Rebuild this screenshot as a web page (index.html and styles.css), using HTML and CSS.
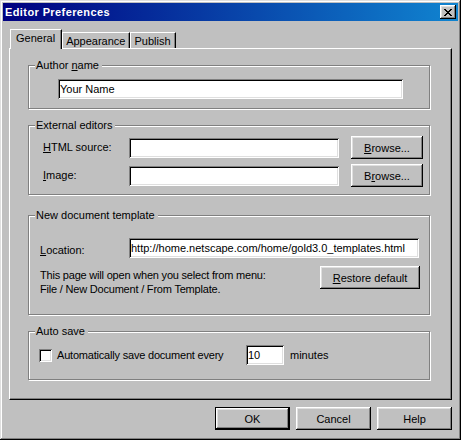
FILE: index.html
```html
<!DOCTYPE html>
<html>
<head>
<meta charset="utf-8">
<title>Editor Preferences</title>
<link rel="stylesheet" href="styles.css">
</head>
<body>
<div class="window">
  <div class="titlebar">
    <span class="title">Editor Preferences</span>
    <button class="close" type="button" aria-label="Close">
      <svg width="8" height="7" viewBox="0 0 8 7" shape-rendering="crispEdges"><path fill="#000" d="M0 0h2v1H0zM6 0h2v1H6zM1 1h2v1H1zM5 1h2v1H5zM2 2h4v1H2zM3 3h2v1H3zM2 4h4v1H2zM1 5h2v1H1zM5 5h2v1H5zM0 6h2v1H0zM6 6h2v1H6z"/></svg>
    </button>
  </div>
  <div class="client">
    <div class="tabs">
      <div class="tab tab-active">General</div>
      <div class="tab">Appearance</div>
      <div class="tab">Publish</div>
    </div>
    <div class="panel">
      <fieldset class="group group-author">
        <legend>Author <u>n</u>ame</legend>
        <div class="author-body">
          <input class="field field-author" type="text" value="Your Name">
        </div>
      </fieldset>

      <fieldset class="group group-editors">
        <legend>External editors</legend>
        <div class="editors-body">
          <label class="row-label"><u>H</u>TML source:</label>
          <input class="field field-editor" type="text" value="">
          <button class="btn btn-browse" type="button"><u>B</u>rowse...</button>
          <label class="row-label"><u>I</u>mage:</label>
          <input class="field field-editor" type="text" value="">
          <button class="btn btn-browse" type="button">B<u>r</u>owse...</button>
        </div>
      </fieldset>

      <fieldset class="group group-template">
        <legend>New document template</legend>
        <div class="template-body">
          <div class="location-row">
            <label class="location-label"><u>L</u>ocation:</label>
            <input class="field field-location" type="text" value="http://home.netscape.com/home/gold3.0_templates.html">
          </div>
          <div class="restore-row">
            <p class="hint">This page will open when you select from menu:<br>File / New Document / From Template.</p>
            <button class="btn btn-restore" type="button"><u>R</u>estore default</button>
          </div>
        </div>
      </fieldset>

      <fieldset class="group group-autosave">
        <legend>Auto save</legend>
        <div class="autosave-body">
          <span class="checkbox"></span>
          <span class="autosave-label">Automatically save document every</span>
          <input class="field field-minutes" type="text" value="10">
          <span class="minutes">minutes</span>
        </div>
      </fieldset>
    </div>
    <div class="actions">
      <button class="btn btn-action btn-default" type="button">OK</button>
      <button class="btn btn-action" type="button">Cancel</button>
      <button class="btn btn-action" type="button">Help</button>
    </div>
  </div>
</div>
</body>
</html>
```

FILE: styles.css
```css
html, body {
  margin: 0;
  padding: 0;
  background: #c0c0c0;
}

body {
  font-family: "Liberation Sans", Arial, sans-serif;
  font-size: 11px;
  line-height: 13px;
  color: #000;
}

.window {
  width: 461px;
  height: 440px;
  box-sizing: border-box;
  padding: 3px;
  background: #c0c0c0;
  box-shadow: inset -1px -1px #000, inset 1px 1px #dfdfdf, inset -2px -2px #808080, inset 2px 2px #fff;
}

.titlebar {
  height: 18px;
  display: flex;
  align-items: center;
  justify-content: space-between;
  padding: 0 2px;
  background: linear-gradient(90deg, #000080, #1084d0);
}

.title {
  color: #fff;
  font-weight: bold;
  font-size: 11px;
  line-height: 18px;
  letter-spacing: 0.4px;
}

.close {
  width: 16px;
  height: 14px;
  padding: 0;
  border: 0;
  margin: 0;
  background: #c0c0c0;
  box-shadow: inset -1px -1px #000, inset 1px 1px #fff, inset -2px -2px #808080, inset 2px 2px #dfdfdf;
  display: flex;
  align-items: flex-start;
  justify-content: flex-start;
}

.close svg {
  display: block;
  margin: 4px 0 0 4px;
}

.client {
  padding: 0 6px;
}

.tabs {
  position: relative;
  z-index: 1;
  display: flex;
  align-items: flex-end;
  margin-top: 8px;
  padding-left: 3px;
}

.tab {
  height: 16px;
  box-sizing: border-box;
  padding: 2px 4px 0 3px;
  border-top: 1px solid #fff;
  border-left: 1px solid #fff;
  border-right: 1px solid #000;
  box-shadow: inset -1px 0 #808080;
  background: #c0c0c0;
  white-space: nowrap;
}

.tab-active {
  height: 20px;
  padding: 2px 6px 0 5px;
  margin: 0 0 -1px -2px;
}

.panel {
  height: 352px;
  box-sizing: border-box;
  padding: 0 21px 0 18px;
  border: 1px solid;
  border-color: #fff #000 #000 #fff;
  box-shadow: inset -1px -1px #808080;
}

.group {
  margin: 10px 0 0;
  padding: 0;
  min-width: 0;
  border: 1px solid #808080;
  box-shadow: 1px 1px 0 #fff, inset 1px 1px 0 #fff;
}

.group-template {
  margin-top: 14px;
}

.group legend {
  margin-left: 6px;
  padding: 0 3px 0 1px;
  line-height: 13px;
  background: #c0c0c0;
}

.field {
  display: block;
  height: 20px;
  box-sizing: border-box;
  margin: 0;
  padding: 0 2px;
  border: 0;
  outline: none;
  background: #fff;
  font-family: "Liberation Sans", Arial, sans-serif;
  font-size: 11px;
  color: #000;
  box-shadow: inset 1px 1px #808080, inset -1px -1px #fff, inset 2px 2px #000, inset -2px -2px #dfdfdf;
}

.btn {
  height: 23px;
  box-sizing: border-box;
  margin: 0;
  padding: 0;
  border: 0;
  background: #c0c0c0;
  font-family: "Liberation Sans", Arial, sans-serif;
  font-size: 11px;
  color: #000;
  box-shadow: inset -1px -1px #000, inset 1px 1px #fff, inset -2px -2px #808080, inset 2px 2px #dfdfdf;
}

.btn-default {
  box-shadow: inset 0 0 0 1px #000, inset -2px -2px #000, inset 2px 2px #fff, inset -3px -3px #808080, inset 3px 3px #dfdfdf;
}

.author-body {
  padding: 7px 0 9px 29px;
}

.field-author {
  width: 345px;
}

.editors-body {
  display: grid;
  grid-template-columns: 86px 222px 72px;
  row-gap: 5px;
  align-items: center;
  padding: 4px 0 7px 14px;
}

.field-editor {
  width: 210px;
}

.btn-browse {
  width: 72px;
}

.template-body {
  padding: 16px 9px 18px 11px;
}

.location-row {
  display: flex;
  align-items: flex-end;
}

.location-label {
  width: 89px;
  flex: none;
  margin-bottom: 1px;
}

.field-location {
  width: 290px;
  flex: none;
}

.restore-row {
  display: flex;
  justify-content: space-between;
  align-items: flex-start;
  margin-top: 8px;
}

.hint {
  margin: 2px 0 0;
  line-height: 14px;
  letter-spacing: -0.2px;
}

.btn-restore {
  width: 100px;
  flex: none;
}

.autosave-body {
  display: flex;
  align-items: center;
  padding: 7px 0 14px 10px;
}

.checkbox {
  width: 13px;
  height: 13px;
  flex: none;
  background: #fff;
  box-shadow: inset 1px 1px #808080, inset -1px -1px #fff, inset 2px 2px #000, inset -2px -2px #dfdfdf;
}

.autosave-label {
  width: 189px;
  flex: none;
  margin-left: 5px;
  letter-spacing: -0.2px;
}

.field-minutes {
  width: 38px;
  flex: none;
}

.minutes {
  margin-left: 6px;
}

.actions {
  display: flex;
  justify-content: flex-end;
  gap: 6px;
  margin-top: 7px;
}

.btn-action {
  width: 75px;
}
```
